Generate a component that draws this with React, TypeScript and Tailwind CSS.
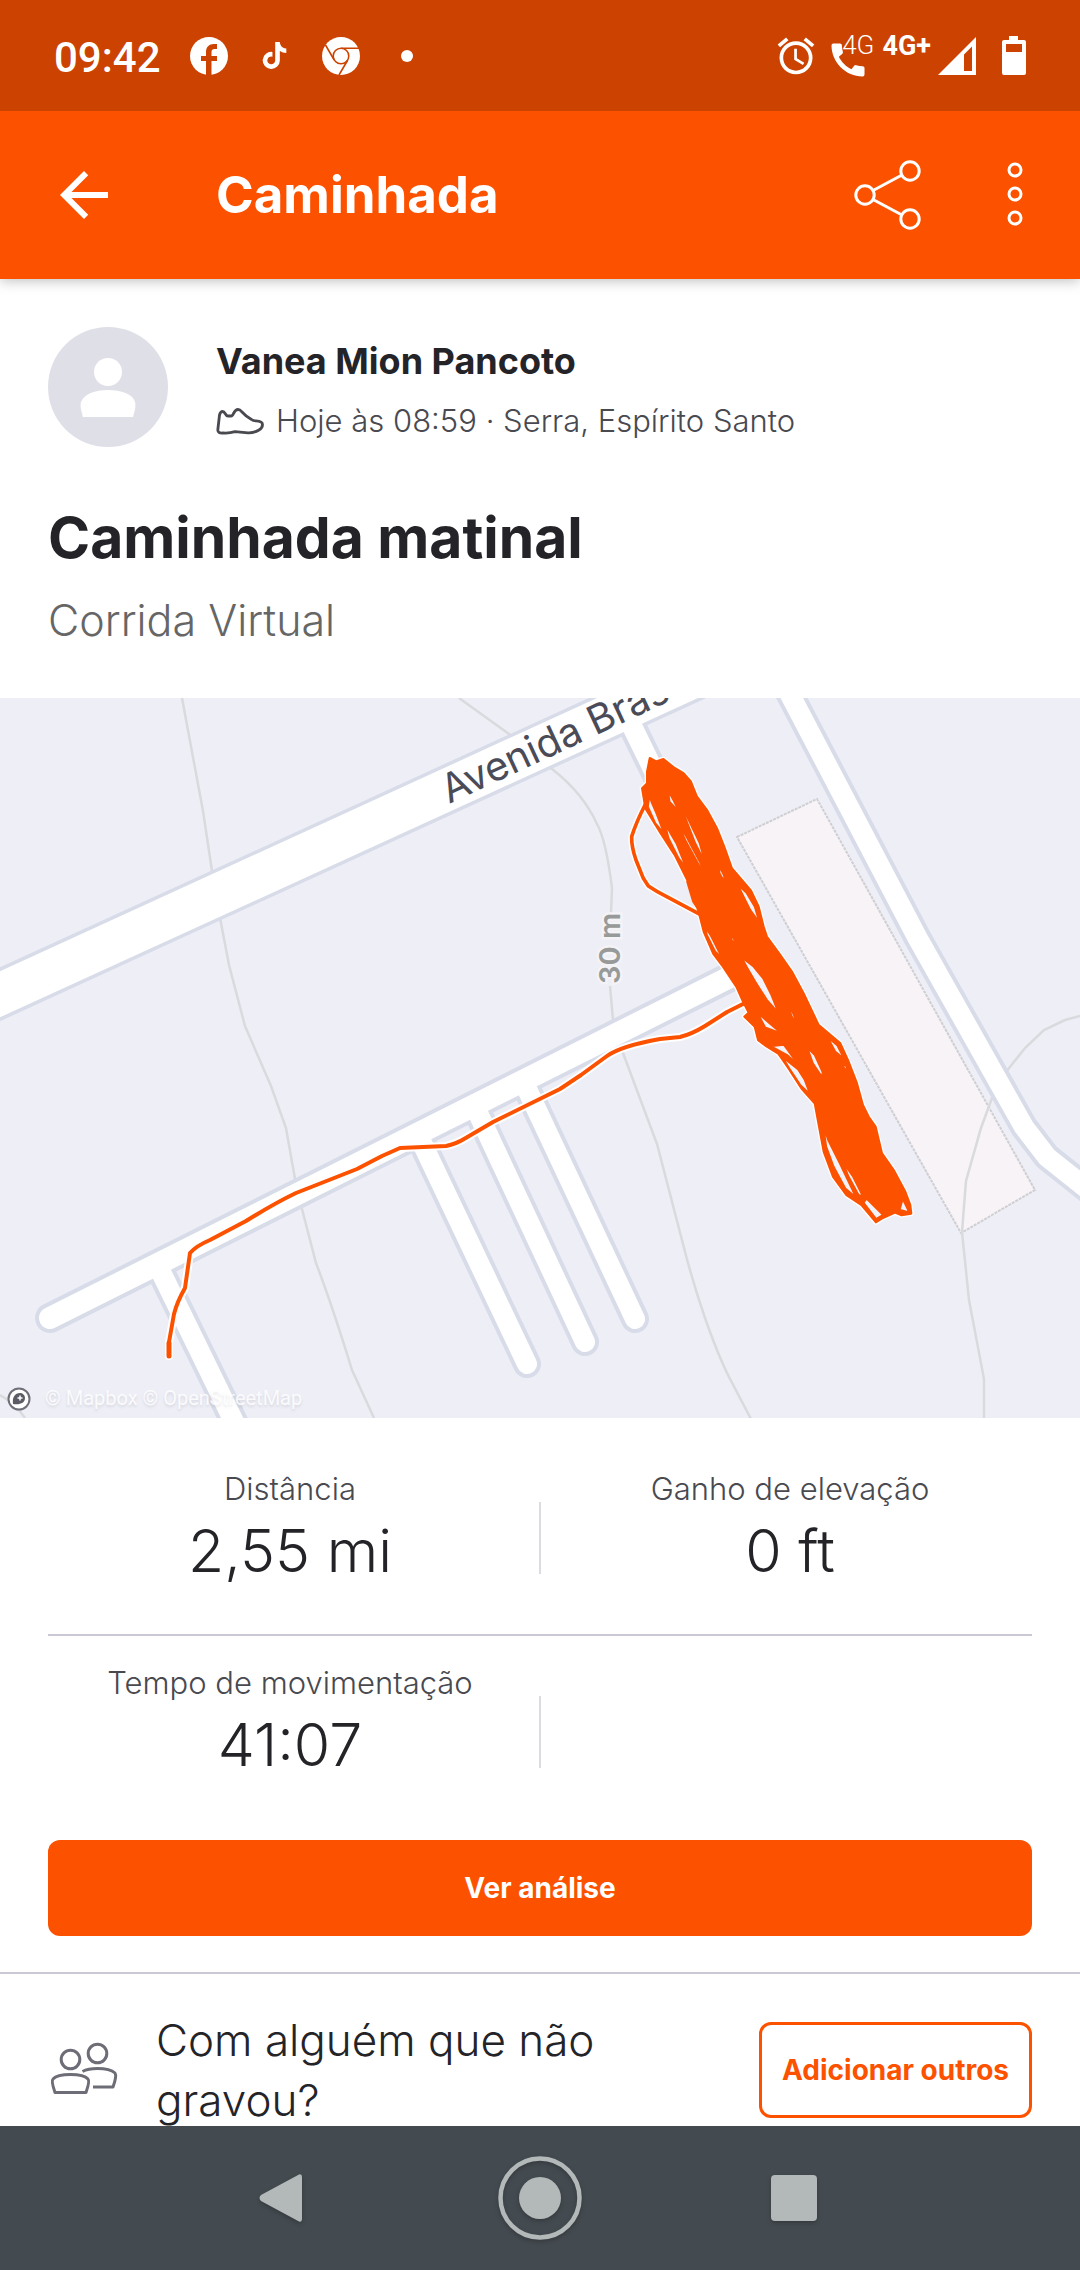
import React from "react";
import { MdAlarm, MdArrowBack, MdCall } from "react-icons/md";
import { FaTiktok } from "react-icons/fa";

function FacebookIcon() {
  return (
    <svg viewBox="0 0 38 38" className="size-[38px]" aria-label="Facebook">
      <circle cx="19" cy="19" r="19" fill="#fff" />
      <path
        d="M16 38V24h-5v-5h5v-4c0-5 3-8 8-8h3v5h-2.500c-2 0-3 1-3 3v4H27v5h-5.500v14z"
        fill="#cc4200"
      />
    </svg>
  );
}

function ChromeIcon() {
  return (
    <svg viewBox="0 0 38 38" className="size-[38px]" aria-label="Chrome">
      <circle cx="19" cy="19" r="19" fill="#fff" />
      <g fill="none" stroke="#cc4200" strokeWidth="1.600">
        <circle cx="19" cy="19" r="7.800" />
        <path d="M19 11.200H37M12.200 23L3.500 8M25.800 23L17 38" />
      </g>
    </svg>
  );
}

function StatusBar() {
  return (
    <div className="relative z-20 flex h-[111px] shrink-0 items-center justify-between bg-[#cc4200] px-[54px] text-white">
      <div className="flex items-center">
        <span className="mt-1 font-[Roboto,sans-serif] text-[42px] font-medium leading-[50px]">09:42</span>
        <div className="ml-[29px] flex items-center gap-7">
          <FacebookIcon />
          <span className="flex size-[38px] items-center justify-center">
            <FaTiktok className="size-[27px]" />
          </span>
          <ChromeIcon />
          <span className="flex size-[38px] items-center justify-center">
            <span className="size-3 rounded-full bg-white" />
          </span>
        </div>
      </div>
      <div className="flex items-center">
        <MdAlarm className="size-[44px]" />
        <div className="relative ml-2 h-[44px] w-[48px]">
          <MdCall className="absolute -bottom-1 left-0 size-[44px]" />
          <span className="absolute -top-1 right-0 font-[Roboto,sans-serif] text-[26px] font-light leading-[30px]">
            4G
          </span>
        </div>
        <span className="mb-[20px] ml-2 font-[Roboto,sans-serif] text-[27px] font-bold leading-7">4G+</span>
        <svg viewBox="0 0 38 38" className="ml-[7px] size-[38px]" aria-hidden="true">
          <path d="M38 0V38H0ZM34 9.500L26 17.500V34H34Z" fill="#fff" fillRule="evenodd" />
        </svg>
        <svg viewBox="0 0 24 40" className="ml-[26px] h-10 w-6" aria-hidden="true">
          <path
            d="M7 0h9v4h6a2 2 0 0 1 2 2v31a2 2 0 0 1-2 2H2a2 2 0 0 1-2-2V6a2 2 0 0 1 2-2h5zM4 8v8h16V8z"
            fill="#fff"
            fillRule="evenodd"
          />
        </svg>
      </div>
    </div>
  );
}

function AppBar() {
  return (
    <header className="relative z-10 flex h-[168px] shrink-0 items-center bg-[#fc5200] px-12 text-white shadow-[0_2px_12px_rgba(0,0,0,0.25)]">
      <button type="button" aria-label="Voltar">
        <MdArrowBack className="size-[72px]" />
      </button>
      <h1 className="ml-24 flex-1 text-[51px] font-bold leading-[64px]">Caminhada</h1>
      <button type="button" aria-label="Compartilhar">
        <svg viewBox="0 0 72 72" className="size-[72px]" fill="none" stroke="#fff" strokeWidth="3">
          <circle cx="15" cy="36" r="9.200" />
          <circle cx="60" cy="12" r="9.200" />
          <circle cx="60" cy="60" r="9.200" />
          <path d="M23 31.500L52 16M23 40.500L52 56" />
        </svg>
      </button>
      <button type="button" aria-label="Mais opções" className="ml-[76px]">
        <svg viewBox="0 0 34 72" className="h-[72px] w-[34px]" fill="none" stroke="#fff" strokeWidth="3">
          <circle cx="17" cy="11" r="6" />
          <circle cx="17" cy="35" r="6" />
          <circle cx="17" cy="59" r="6" />
        </svg>
      </button>
    </header>
  );
}

const avenue = "M-30 1008L770 642";
const mainStreet = "M50 1318L736 974";
const roadEast = "M774 664L917 937L1024 1127L1047 1157L1100 1199";

const minorStreets = [
  "M160 1270L240 1434",
  "M422 1143L527 1364",
  "M477 1111L585 1342",
  "M526 1087L635 1319",
  "M630 722L745 958",
];

const contours = [
  "M182 698L203 811L212 871L221 923L229 965L245 1026L271 1086L286 1128L295 1179L302 1209L316 1263Q332 1305 352 1370L374 1418",
  "M459 698L509 734L552 769Q583 793 597 824Q606 840 612 888L611 913",
  "M610 986L613 1020L623 1053L657 1144L683 1244Q692 1280 705 1318Q718 1355 729 1377L751 1419",
  "M1080 1016L1065 1020L1044 1030L1025 1048L1006 1072L992 1098L981 1128L966 1181L962 1232L969 1300L984 1379V1419",
  "M0 1395Q14 1402 25 1418",
];

const gaps = [
  "203,178 222,212 240,250 208,215",
  "225,262 260,320 300,395 330,470 296,405 255,330",
  "238,218 262,260 300,340 318,405 285,340",
  "262,208 280,232 290,262",
  "192,275 230,340 262,420 235,385 205,325",
  "148,195 155,215 170,250 195,315 165,280 143,230",
  "160,122 167,126 155,145",
  "181,120 192,126 187,122",
  "133,178 145,168 140,185",
  "325,350 335,360 333,378",
  "355,402 372,435 380,468 358,430",
  "410,460 440,488 465,530 480,582 450,540",
  "365,475 395,530 417,578 385,525",
  "262,455 290,530 280,515",
  "313,585 335,620 370,690 345,665 320,615",
  "358,610 382,665 370,650",
  "388,600 412,645 395,632",
  "400,720 418,748 410,743",
  "422,678 460,708 490,745 515,795 538,853 500,810 465,755 440,712",
  "470,845 510,880 548,912 495,893",
  "550,795 580,850 600,895 575,860",
  "530,828 562,882 545,865",
  "475,905 530,928 497,922",
  "478,915 498,938 488,938",
  "620,950 645,975 668,1025 668,1045 638,1000",
  "672,1045 692,1090 678,1070",
  "680,918 712,945 735,990 705,965",
  "722,1000 740,1008 742,1028",
  "510,948 552,944 600,1010 560,975",
  "545,978 595,1018 615,1050 632,1095 600,1065 570,1020",
  "668,1120 680,1142 672,1136",
  "680,1165 700,1190 718,1225 700,1205",
  "703,1155 716,1180 709,1172",
  "668,1180 685,1230 720,1300 770,1405 735,1375 700,1310 678,1250",
  "725,1290 760,1340 790,1400 775,1395 745,1340",
  "760,1200 775,1222 767,1216",
  "808,1290 822,1310 814,1306",
  "825,1330 845,1370 848,1385 832,1360",
  "800,1405 850,1455 828,1468 790,1418",
  "908,1405 925,1440 925,1447 898,1440",
];

const laps =
  "M150 85L168 95L190 88L220 112L250 130L272 155L290 200L320 240L350 295L372 350L395 415L452 482L475 530L490 590L500 620L540 675L575 725L610 790L655 885L720 940L745 995L770 1060L788 1125L805 1160L826 1190L845 1270L880 1320L915 1385L930 1425L933 1450L905 1455L885 1447L845 1465L828 1476L785 1425L740 1395L700 1340L672 1265L658 1190L645 1120L605 1075L570 1020L535 970L495 945L475 930L465 890L434 860L447 848L430 815L410 770L370 710L340 670L312 605L298 550L270 465L225 375L180 305L137 235L127 175L142 160L142 125Z";

const route =
  "M169 1356V1342L174 1314Q177 1302 185 1288L190 1253Q196 1246 210 1240L246 1221Q275 1203 296 1193L357 1169L382 1156L400 1148L446 1146Q456 1144 464 1139L493 1122L560 1089L581 1075L607 1056Q621 1046 660 1039L680 1037Q692 1034 705 1026L727 1012L743 1004";

const loop = "M135 225Q108 278 95 320Q94 350 108 390L130 445L145 468Q170 485 200 500L300 553";

function RouteMap() {
  return (
    <svg
      viewBox="0 698 1080 720"
      className="block w-full bg-[#eeeef7]"
      role="img"
      aria-label="Mapa do percurso"
    >
      <path d="M737 837L817 799L1035 1190L961 1233Z" fill="#f7f3f7" stroke="#cfcfd2" strokeWidth="2" strokeDasharray="3 1" />
      <g fill="none" stroke="#d9dadd" strokeWidth="2.500">
        {contours.map((d) => (
          <path key={d} d={d} />
        ))}
      </g>
      <g fill="none" strokeLinecap="round" strokeLinejoin="round">
        <g stroke="#d8dce8">
          <path d={avenue} strokeWidth="49" />
          <path d={roadEast} strokeWidth="28" />
          <path d={mainStreet} strokeWidth="30" />
          <g strokeWidth="28">
            {minorStreets.map((d) => (
              <path key={d} d={d} />
            ))}
          </g>
        </g>
        <g stroke="#fff">
          <path d={avenue} strokeWidth="42" />
          <path d={roadEast} strokeWidth="20" />
          <path d={mainStreet} strokeWidth="22" />
          <g strokeWidth="20">
            {minorStreets.map((d) => (
              <path key={d} d={d} />
            ))}
          </g>
        </g>
      </g>
      <g className="font-[Inter,sans-serif]">
        <text transform="translate(449 804) rotate(-25)" fontSize="40" fill="#4a4b57">
          Avenida Bras
        </text>
        <text
          transform="translate(620 984) rotate(-90)"
          fontSize="29"
          fontWeight="600"
          fill="#979a99"
          stroke="#f4f3f6"
          strokeWidth="5"
          paintOrder="stroke"
        >
          30 m
        </text>
      </g>
      <g strokeLinejoin="round" strokeLinecap="round">
        <path d={route} fill="none" stroke="#fff" strokeWidth="8" />
        <g transform="translate(600 730) scale(0.33333)">
          <path d={loop} fill="none" stroke="#fff" strokeWidth="20" />
          <path d={laps} fill="#fff" stroke="#fff" strokeWidth="16" />
          <path d={loop} fill="none" stroke="#fc5200" strokeWidth="11" />
          <path d={laps} fill="#fc5200" stroke="#fc5200" strokeWidth="8" />
          <g fill="#f4f3fa" stroke="#fc5200" strokeWidth="7">
            {gaps.map((points) => (
              <polygon key={points} points={points} />
            ))}
          </g>
        </g>
        <path d={route} fill="none" stroke="#fc5200" strokeWidth="4" />
        <path d="M169 1343V1356" fill="none" stroke="#fc5200" strokeWidth="5" />
      </g>
      <circle cx="19" cy="1399" r="10.500" fill="#fff" stroke="#6e6e78" strokeWidth="2" />
      <path d="M13 1404c-1-7 2-11 7-11a5 5 0 0 1 5 5c0 5-5 7-12 6z" fill="#5b5b65" />
      <path d="M20 1395.500v5M17.500 1398h5" stroke="#fff" strokeWidth="1.500" />
      <text
        x="45"
        y="1405"
        fontSize="20"
        fill="#fff"
        fillOpacity="0.85"
        className="font-[Roboto,sans-serif] [text-shadow:0_2px_3px_rgba(0,0,0,0.12)]"
      >
        © Mapbox © OpenStreetMap
      </text>
    </svg>
  );
}

function Stat({ label, value }: { label: string; value: string }) {
  return (
    <div className="flex flex-1 flex-col items-center">
      <dt className="text-[31px] font-[350] leading-10 text-[#494950]">{label}</dt>
      <dd className="mt-2 text-[59px] font-[350] leading-[68px] text-[#242428]">{value}</dd>
    </div>
  );
}

function StatDivider() {
  return <div className="mx-[7px] mt-[33px] h-[72px] w-[2px] bg-[#dcdce0]" />;
}

function Activity() {
  return (
    <main className="min-h-0 flex-1 overflow-hidden">
      <section className="px-12 pt-12">
        <div className="flex items-center">
          <svg viewBox="0 0 120 120" className="size-[120px]" aria-hidden="true">
            <circle cx="60" cy="60" r="60" fill="#dfdfe8" />
            <circle cx="60" cy="45" r="14" fill="#fff" />
            <path d="M35 90c-2-7-3-11-2-15 3-8 14-12 27-12s25 4 27 12c1 4 0 8-2 15z" fill="#fff" />
          </svg>
          <div className="ml-12 pt-[6px]">
            <h2 className="text-[36px] font-bold leading-[44px] text-[#242428]">Vanea Mion Pancoto</h2>
            <p className="mt-[18px] flex items-center gap-3 text-[31px] font-[350] leading-10 text-[#494950]">
              <svg viewBox="0 0 48 28" className="h-7 w-12" fill="none" stroke="#494950" strokeWidth="2.800" strokeLinejoin="round" aria-hidden="true">
                <path d="M1.800 23L3.500 8Q4.500 4.500 6.500 4.500Q8 4.500 9.500 7Q10.500 9 12 9H15Q16.500 9 17.500 6.500Q19.500 2.500 22 2.500Q24 2.500 25.500 4.500Q30 9.500 35.500 12.500Q37 13.700 40 13.800Q46.500 14 46.500 17.500Q46.500 21 43 23Q38 26 32 25.800L19 24.700Q13 26.500 7 26Q1.800 26.500 1.800 23Z" />
              </svg>
              Hoje às 08:59 · Serra, Espírito Santo
            </p>
          </div>
        </div>
        <h3 className="mt-[55px] text-[57px] font-bold leading-[72px] text-[#242428]">Caminhada matinal</h3>
        <p className="mb-[51px] mt-[19px] text-[43px] font-[350] leading-[54px] text-[#666]">Corrida Virtual</p>
      </section>
      <RouteMap />
      <section className="px-12">
        <dl>
          <div className="flex h-[218px] border-b-2 border-[#c9c9d6] pt-[51px]">
            <Stat label="Distância" value="2,55 mi" />
            <StatDivider />
            <Stat label="Ganho de elevação" value="0 ft" />
          </div>
          <div className="flex h-[204px] pt-[27px]">
            <Stat label="Tempo de movimentação" value="41:07" />
            <StatDivider />
            <div className="flex-1" />
          </div>
        </dl>
        <button
          type="button"
          className="h-24 w-full rounded-xl bg-[#fc5200] text-[28px] font-bold leading-9 text-white"
        >
          Ver análise
        </button>
      </section>
      <section className="mt-9 flex border-t-2 border-[#c9c9d6] px-12 pt-9">
        <svg viewBox="0 0 72 60" className="mt-[31px] h-[60px] w-[72px]" fill="none" stroke="#6d6d78" strokeWidth="3" strokeLinejoin="round" aria-hidden="true">
          <circle cx="22.500" cy="18.500" r="9.300" />
          <circle cx="49.500" cy="12.500" r="9.300" />
          <path d="M7 51.500Q3 40 5 38Q9 33.500 22.500 33.500T40 38Q42 40 38 51.500Z" />
          <path d="M34.500 30.500Q40 27.500 49.500 27.500Q62 27.500 67 32Q69 35 65 46H45" />
        </svg>
        <p className="ml-9 w-[540px] text-[44px] font-[350] leading-[60px] text-[#242428]">Com alguém que não gravou?</p>
        <button
          type="button"
          className="ml-auto mt-3 h-24 shrink-0 rounded-xl border-[3px] border-[#fc5200] px-5 text-[28px] font-bold leading-9 text-[#fc5200]"
        >
          Adicionar outros
        </button>
      </section>
    </main>
  );
}

function NavigationBar() {
  return (
    <nav className="flex h-36 shrink-0 items-center justify-center gap-[170px] bg-[#444b50]">
      <button type="button" aria-label="Voltar" className="drop-shadow-[0_2px_2px_rgba(0,0,0,0.25)]">
        <svg viewBox="0 0 84 84" className="size-[84px]">
          <path d="M17 39Q14 42 17 45L55 65.500Q58 66.500 58 63V21Q58 17.500 55 18.500Z" fill="#b3b8b8" />
        </svg>
      </button>
      <button type="button" aria-label="Início" className="drop-shadow-[0_2px_2px_rgba(0,0,0,0.25)]">
        <svg viewBox="0 0 84 84" className="size-[84px]">
          <circle cx="42" cy="42" r="39.500" fill="none" stroke="#b3b8b8" strokeWidth="4.500" />
          <circle cx="42" cy="42" r="21" fill="#b3b8b8" />
        </svg>
      </button>
      <button type="button" aria-label="Recentes" className="drop-shadow-[0_2px_2px_rgba(0,0,0,0.25)]">
        <svg viewBox="0 0 84 84" className="size-[84px]">
          <rect x="19" y="19" width="46" height="46" rx="4" fill="#b3b8b8" />
        </svg>
      </button>
    </nav>
  );
}

export default function App() {
  return (
    <div className="flex h-screen flex-col bg-white font-[Inter,sans-serif]">
      <StatusBar />
      <AppBar />
      <Activity />
      <NavigationBar />
    </div>
  );
}
